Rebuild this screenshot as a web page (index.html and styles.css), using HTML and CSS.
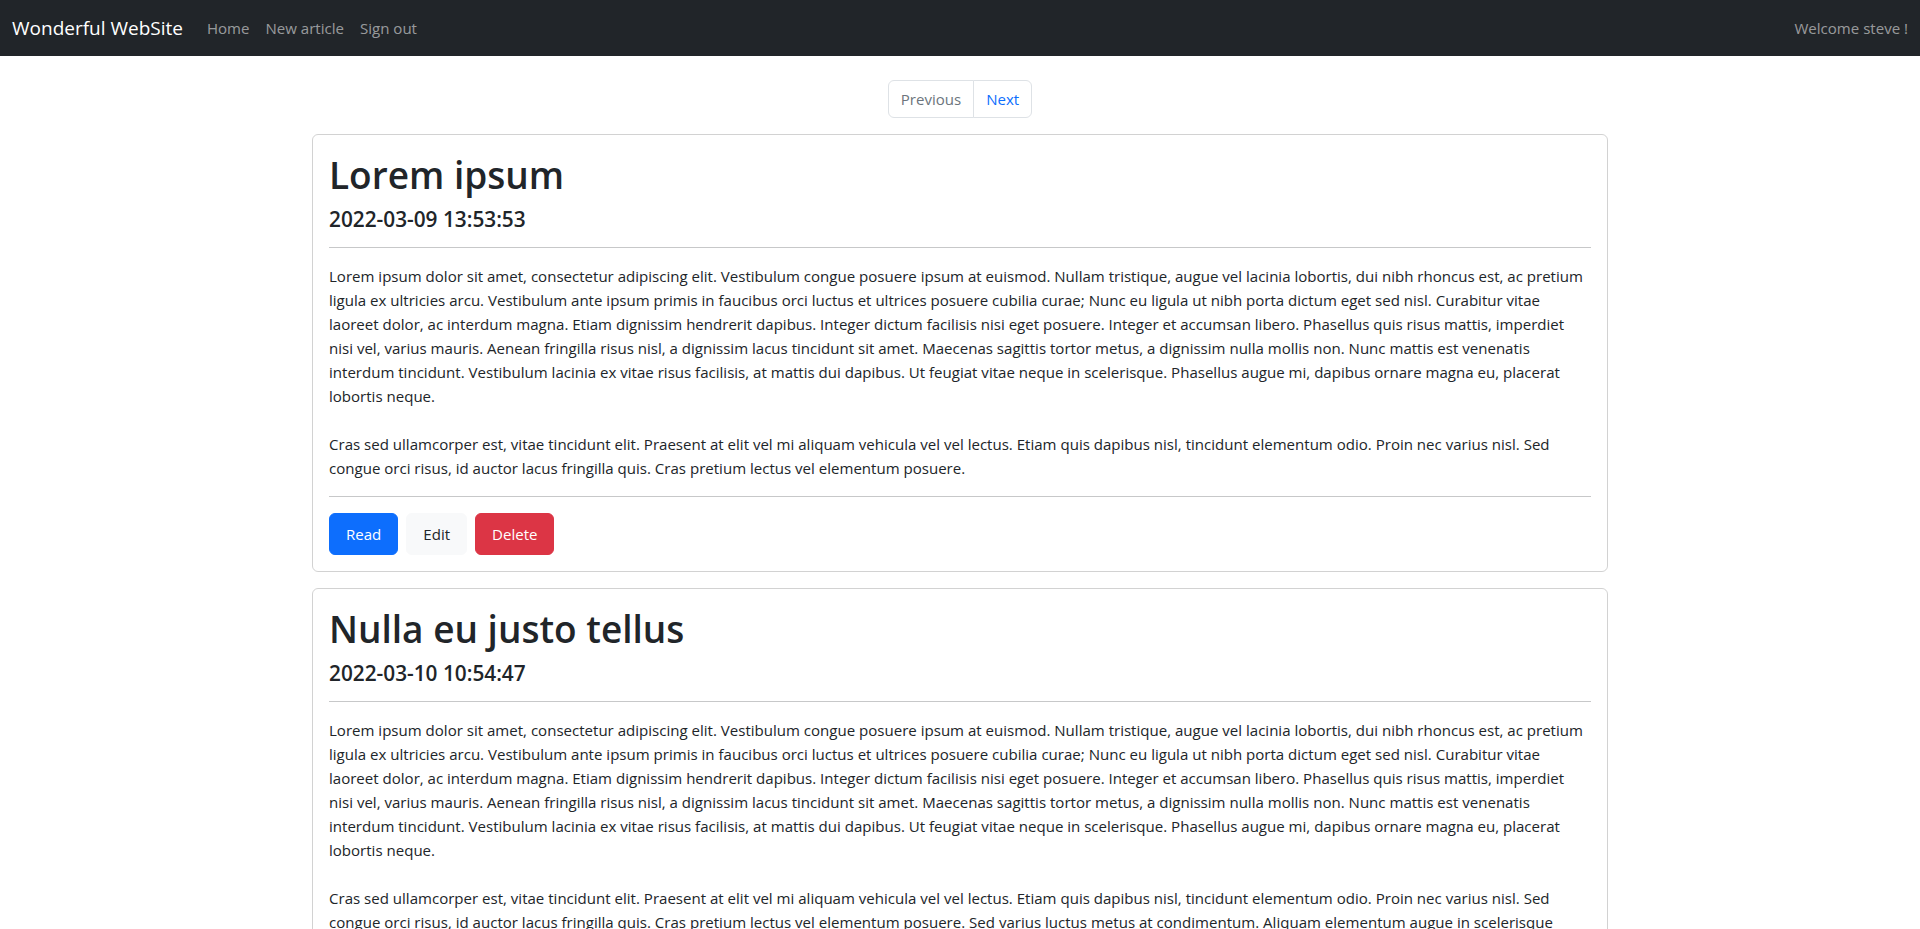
FILE: index.html
```html
<!DOCTYPE html>
<html lang="en">
<head>
<meta charset="utf-8">
<title>Wonderful WebSite</title>
<link rel="stylesheet" href="styles.css">
</head>
<body>
<nav class="navbar">
  <div class="navbar-left">
    <a class="brand" href="#">Wonderful WebSite</a>
    <ul class="nav-links">
      <li><a href="#">Home</a></li>
      <li><a href="#">New article</a></li>
      <li><a href="#">Sign out</a></li>
    </ul>
  </div>
  <span class="navbar-text">Welcome steve !</span>
</nav>

<main class="container">
  <ul class="pagination">
    <li class="page-item disabled"><span class="page-link">Previous</span></li>
    <li class="page-item"><a class="page-link" href="#">Next</a></li>
  </ul>

  <article class="card">
    <h1 class="card-title">Lorem ipsum</h1>
    <h5 class="card-date">2022-03-09 13:53:53</h5>
    <hr class="divider">
    <p class="card-text">Lorem ipsum dolor sit amet, consectetur adipiscing elit. Vestibulum congue posuere ipsum at euismod. Nullam tristique, augue vel lacinia lobortis, dui nibh rhoncus est, ac pretium ligula ex ultricies arcu. Vestibulum ante ipsum primis in faucibus orci luctus et ultrices posuere cubilia curae; Nunc eu ligula ut nibh porta dictum eget sed nisl. Curabitur vitae laoreet dolor, ac interdum magna. Etiam dignissim hendrerit dapibus. Integer dictum facilisis nisi eget posuere. Integer et accumsan libero. Phasellus quis risus mattis, imperdiet nisi vel, varius mauris. Aenean fringilla risus nisl, a dignissim lacus tincidunt sit amet. Maecenas sagittis tortor metus, a dignissim nulla mollis non. Nunc mattis est venenatis interdum tincidunt. Vestibulum lacinia ex vitae risus facilisis, at mattis dui dapibus. Ut feugiat vitae neque in scelerisque. Phasellus augue mi, dapibus ornare magna eu, placerat lobortis neque.<br><br>Cras sed ullamcorper est, vitae tincidunt elit. Praesent at elit vel mi aliquam vehicula vel vel lectus. Etiam quis dapibus nisl, tincidunt elementum odio. Proin nec varius nisl. Sed congue orci risus, id auctor lacus fringilla quis. Cras pretium lectus vel elementum posuere.</p>
    <hr class="divider">
    <div class="actions">
      <a class="btn btn-primary" href="#">Read</a>
      <a class="btn btn-light" href="#">Edit</a>
      <a class="btn btn-danger" href="#">Delete</a>
    </div>
  </article>

  <article class="card">
    <h1 class="card-title">Nulla eu justo tellus</h1>
    <h5 class="card-date">2022-03-10 10:54:47</h5>
    <hr class="divider">
    <p class="card-text">Lorem ipsum dolor sit amet, consectetur adipiscing elit. Vestibulum congue posuere ipsum at euismod. Nullam tristique, augue vel lacinia lobortis, dui nibh rhoncus est, ac pretium ligula ex ultricies arcu. Vestibulum ante ipsum primis in faucibus orci luctus et ultrices posuere cubilia curae; Nunc eu ligula ut nibh porta dictum eget sed nisl. Curabitur vitae laoreet dolor, ac interdum magna. Etiam dignissim hendrerit dapibus. Integer dictum facilisis nisi eget posuere. Integer et accumsan libero. Phasellus quis risus mattis, imperdiet nisi vel, varius mauris. Aenean fringilla risus nisl, a dignissim lacus tincidunt sit amet. Maecenas sagittis tortor metus, a dignissim nulla mollis non. Nunc mattis est venenatis interdum tincidunt. Vestibulum lacinia ex vitae risus facilisis, at mattis dui dapibus. Ut feugiat vitae neque in scelerisque. Phasellus augue mi, dapibus ornare magna eu, placerat lobortis neque.<br><br>Cras sed ullamcorper est, vitae tincidunt elit. Praesent at elit vel mi aliquam vehicula vel vel lectus. Etiam quis dapibus nisl, tincidunt elementum odio. Proin nec varius nisl. Sed congue orci risus, id auctor lacus fringilla quis. Cras pretium lectus vel elementum posuere. Sed varius luctus metus at condimentum. Aliquam elementum augue in scelerisque dapibus. Donec at nisl vitae lorem volutpat rhoncus. Nulla facilisi.</p>
    <hr class="divider">
    <div class="actions">
      <a class="btn btn-primary" href="#">Read</a>
      <a class="btn btn-light" href="#">Edit</a>
      <a class="btn btn-danger" href="#">Delete</a>
    </div>
  </article>
</main>
</body>
</html>
```

FILE: styles.css
```css
* { box-sizing: border-box; }

body {
  margin: 0;
  font-family: "Open Sans", Lato, sans-serif;
  font-size: 15.05px;
  line-height: 24px;
  color: #212529;
  background: #fff;
}

a { text-decoration: none; }

.navbar {
  display: flex;
  align-items: center;
  justify-content: space-between;
  height: 56px;
  padding: 0 12px;
  background: #212529;
}

.navbar-left {
  display: flex;
  align-items: center;
}

.brand {
  color: #fff;
  font-size: 19px;
  line-height: 30px;
  margin-right: 16px;
}

.nav-links {
  display: flex;
  list-style: none;
  margin: 0;
  padding: 0;
}

.nav-links a {
  display: block;
  padding: 8px;
  color: rgba(255, 255, 255, 0.55);
}

.navbar-text {
  color: rgba(255, 255, 255, 0.55);
}

.container {
  width: 1296px;
  margin: 24px auto 0;
}

.pagination {
  display: flex;
  justify-content: center;
  list-style: none;
  margin: 0 0 16px;
  padding: 0;
}

.page-link {
  display: block;
  padding: 6px 12px;
  border: 1px solid #dee2e6;
  color: #0d6efd;
  background: #fff;
}

.page-item:first-child .page-link {
  border-radius: 6px 0 0 6px;
}

.page-item:last-child .page-link {
  border-radius: 0 6px 6px 0;
  margin-left: -1px;
}

.page-item.disabled .page-link {
  color: #6c757d;
}

.card {
  border: 1px solid rgba(0, 0, 0, 0.175);
  border-radius: 6px;
  padding: 16px;
  margin-bottom: 16px;
}

.card-title {
  margin: 0 0 8px;
  font-size: 37px;
  font-weight: 600;
  line-height: 48px;
}

.card-date {
  margin: 0;
  font-size: 20.8px;
  font-weight: 600;
  line-height: 24px;
}

.divider {
  margin: 16px 0;
  border: 0;
  border-top: 1px solid #212529;
  opacity: 0.25;
}

.card-text {
  margin: 0;
}

.actions {
  display: flex;
  gap: 8px;
}

.btn {
  display: inline-block;
  padding: 8px 16px;
  border: 1px solid transparent;
  border-radius: 6px;
  font-size: 15.05px;
  line-height: 24px;
}

.btn-primary { background: #0d6efd; border-color: #0d6efd; color: #fff; }
.btn-light { background: #f8f9fa; border-color: #f8f9fa; color: #212529; }
.btn-danger { background: #dc3545; border-color: #dc3545; color: #fff; }
```
